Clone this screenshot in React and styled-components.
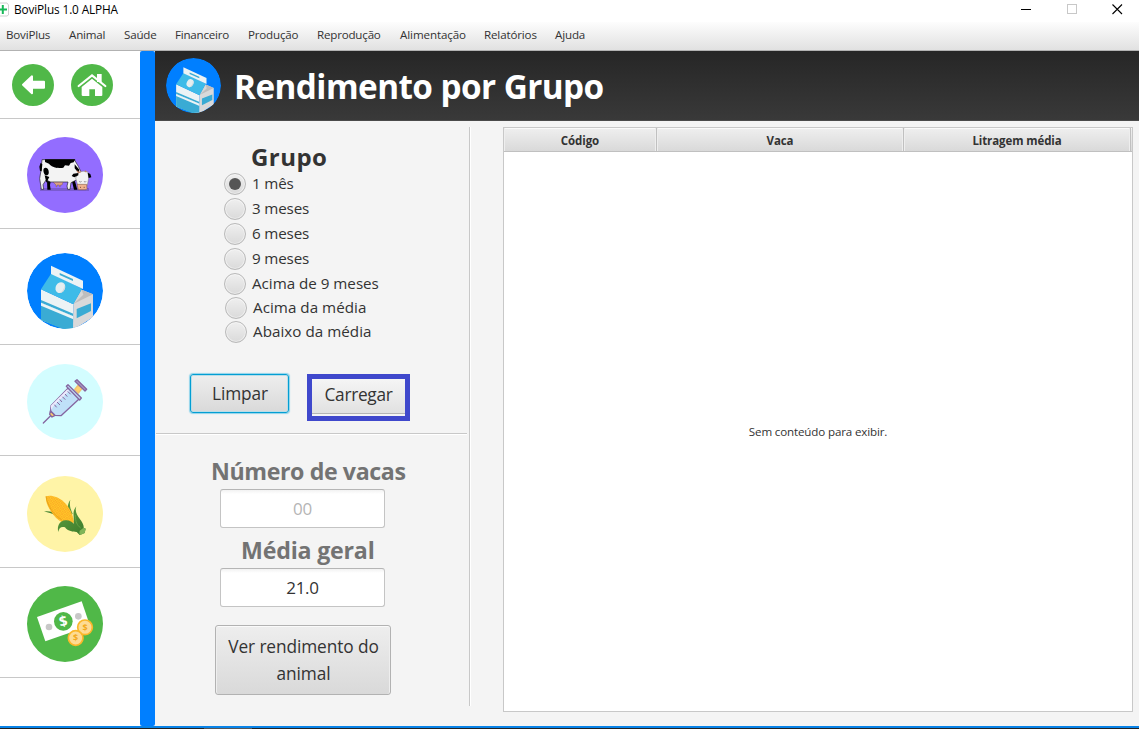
import React from "react";
import styled, { createGlobalStyle } from "styled-components";

const Global = createGlobalStyle`
  * { box-sizing: border-box; }
  html, body { margin: 0; padding: 0; }
  body { background: #fff; overflow: hidden; font-family: "Open Sans", "Noto Sans", sans-serif; color: #333; }
`;

const Window = styled.div`
  width: 1139px; height: 729px; display: flex; flex-direction: column; background: #f4f4f4;
`;
const TitleBar = styled.header`
  height: 22px; flex: none; display: flex; align-items: center; background: #fff; color: #000; padding-bottom: 4px;
`;
const Title = styled.span`
  font-size: 11.8px; letter-spacing: -0.12px; white-space: nowrap; margin-left: 5px; line-height: 16px;
`;
const WindowControls = styled.div`
  margin-left: auto; display: flex; margin-right: 16px; gap: 33.5px; height: 18px;
  svg { display: block; }
`;
const MenuBar = styled.nav`
  height: 29px; flex: none; display: flex; align-items: center; padding: 0 0 3px 6px; gap: 19px;
  background: linear-gradient(#fdfdfd, #e1e1e1); border-bottom: 1px solid #b2b2b2;
`;
const MenuItem = styled.span`
  width: ${(p) => p.$w}px; font-size: 11.6px; letter-spacing: ${(p) => p.$ls}px; white-space: nowrap; line-height: 16px;
`;
const Main = styled.div`
  flex: 1; display: flex; min-height: 0; width: 1139px;
`;
const Sidebar = styled.aside`
  width: 140px; flex: none; background: #fff; display: flex; flex-direction: column;
`;
const NavButtons = styled.div`
  height: 68px; flex: none; border-bottom: 1px solid #c8c8c8; display: flex; padding: 13px 0 0 12px; gap: 17px;
  svg { display: block; }
`;
const SideItem = styled.div`
  height: ${(p) => p.$h}px; flex: none; border-bottom: 1px solid #c8c8c8; padding: ${(p) => p.$top}px 0 0 27px;
  svg { display: block; }
`;
const Strip = styled.div`
  width: 15px; flex: none; background: #007fff; border-radius: 2px;
`;
const Content = styled.main`
  flex: 1; display: flex; flex-direction: column; min-width: 0;
`;
const Banner = styled.div`
  height: 70px; flex: none; display: flex; align-items: center; padding-left: 11px;
  background: linear-gradient(#262626, #393939); border-bottom: 1px solid #4a4a4a;
`;
const BannerTitle = styled.h1`
  margin: 0 0 0 13px; font-size: 33.3px; line-height: 44px; font-weight: 700; color: #fff; letter-spacing: -0.57px; white-space: nowrap;
`;
const Body = styled.div`
  flex: 1; display: flex; min-height: 0;
`;
const Panel = styled.div`
  width: 314px; flex: none; display: flex; flex-direction: column;
`;
const Heading = styled.h2`
  margin: ${(p) => p.$m}; font-size: ${(p) => p.$size || 23.2}px; line-height: 32px; font-weight: 700; color: ${(p) => p.$color || "#333"};
  letter-spacing: ${(p) => p.$ls || 0}px; white-space: nowrap;
`;
const RadioRow = styled.label`
  height: ${(p) => p.$h || 25}px; display: flex; align-items: center; margin-left: ${(p) => p.$x || 69}px;
  font-size: 15.2px; letter-spacing: ${(p) => p.$ls}px; gap: 6px; white-space: nowrap;
`;
const RadioText = styled.span`
  padding-bottom: 2px;
`;
const Radio = styled.span`
  width: 22px; height: 22px; border-radius: 50%; border: 1px solid #b9b9b9; flex: none;
  background: linear-gradient(#efefef, #dadada); box-shadow: inset 0 0 0 1px rgba(255,255,255,.45);
  display: flex; align-items: center; justify-content: center;
`;
const Dot = styled.span`
  width: 12px; height: 12px; border-radius: 50%; background: #555;
`;
const Buttons = styled.div`
  display: flex; margin: 30px 0 0 35px; height: 48px; gap: 18px;
`;
const Button = styled.button`
  font: inherit; color: #333; font-size: 17.3px; padding: 0 0 1px; cursor: pointer;
  background: linear-gradient(#eeeeee, #d9d9d9); border: 1px solid #b2b2b2; border-radius: 3px;
  box-shadow: inset 0 1px 0 #fafafa, inset 1px 0 0 #eee, inset -1px 0 0 #eee;
`;
const FocusedButton = styled(Button)`
  width: 99px; height: 39px; border: 1px solid #039ed3; letter-spacing: -0.1px; padding: 0 0 0 1px;
  box-shadow: 0 0 1px 1px #8fd3ea, inset 0 0 0 1px #b9dde8;
`;
const Highlight = styled.div`
  width: 103px; height: 47px; border: 5px solid #3f48cc; display: flex; flex-direction: column;
`;
const HighlightedButton = styled(Button)`
  height: 35px; border: 0; border-bottom: 1px solid #b5b5b5; border-radius: 0; box-shadow: none;
  background: linear-gradient(#f5f5f5, #e1e1e1); letter-spacing: -0.3px; padding: 0 0 4px;
`;
const TallButton = styled(Button)`
  width: 176px; height: 70px; margin: 18px 0 0 60px; line-height: 27px; letter-spacing: -0.1px; padding: 0 0 1px 1px;
`;
const Rule = styled.hr`
  width: 311px; height: 2px; border: 0; border-top: 1px solid #c8c8c8; border-bottom: 1px solid #fff; margin: 11px 0 0 1px;
`;
const Field = styled.div`
  width: 165px; height: 39px; margin-left: 65px; border: 1px solid #c4c4c4; border-top-color: #b5b5b5; border-radius: 3px; background: linear-gradient(#f2f2f2, #fff 4px);
  display: flex; align-items: center; justify-content: center; font-size: 17px; color: ${(p) => p.$color}; letter-spacing: -0.3px;
`;
const VRule = styled.div`
  width: 2px; flex: none; height: 579px; margin-top: 6px; background: linear-gradient(90deg, #c8c8c8 50%, #fff 50%);
`;
const Table = styled.section`
  width: 630px; height: 585px; flex: none; margin: 6px 0 0 32px; background: #fff; border: 1px solid #c8c8c8; display: flex; flex-direction: column;
`;
const TableHead = styled.div`
  height: 24px; flex: none; display: flex; border-bottom: 1px solid #c0c0c0; background: linear-gradient(#efefef, #d9d9d9); box-shadow: inset 0 1px 0 #fafafa;
`;
const Column = styled.div`
  width: ${(p) => p.$w}px; border-right: 1px solid #c0c0c0; display: flex; align-items: center; justify-content: center; padding-top: 1px;
  font-size: 11.5px; font-weight: 700; letter-spacing: ${(p) => p.$ls}px; box-shadow: inset 1px 0 0 #eee, inset -1px 0 0 #eee;
`;
const Empty = styled.div`
  flex: 1; display: flex; align-items: center; justify-content: center; font-size: 11.6px; letter-spacing: -0.15px;
`;
const BottomEdge = styled.footer`
  height: 3px; flex: none; border-top: 2px solid #0883e8; background: linear-gradient(90deg, #222 204px, #555 204px 252px, #222 252px);
`;

const MilkIcon = ({ size, id }) => (
  <svg width={size} height={size} viewBox="81 39 228 228">
    <clipPath id={id}><circle cx="195" cy="153" r="114" /></clipPath>
    <g clipPath={`url(#${id})`}>
      <circle cx="195" cy="153" r="114" fill="#007fff" />
      <path d="M123 148 220 193 219 275 123 240Z" fill="#ecf3f5" />
      <path d="M123 188 220 229 219 280 123 240Z" fill="#3aabd4" />
      <path d="M123 180 220 221v8L123 188Z" fill="#3aabd4" />
      <path d="M123 188 220 229v9L123 197Z" fill="#ecf3f5" />
      <path d="M220 193 245 149 279 163V232L219 270Z" fill="#d9d9da" />
      <path d="M245 149 279 163 220 192Z" fill="#bdbdbd" />
      <path d="m245 149 5 15-30 29Z" fill="#d6d6d6" />
      <path d="M123 148 154 100 246 146 220 193Z" fill="#3ebbe8" />
      <path d="M153 77 249 122v25l-96-45Z" fill="#ecf3f5" />
      <path d="m179 99 40 18v6l-40-18Z" fill="#3aabd4" />
      <ellipse cx="181" cy="143" rx="14" ry="17" transform="rotate(30 181 143)" fill="#e5eef0" />
      <path d="M188 128c8 8 5 24-9 31 13 0 22-18 9-31Z" fill="#cdd6d9" />
      <path d="m230 207 43-17v23l-43 22Z" fill="#3aabd4" />
    </g>
  </svg>
);

const CowIcon = () => (
  <svg width="76" height="76" viewBox="81 51 228 228">
    <circle cx="195" cy="165" r="114" fill="#936dff" />
    <path d="M120 204H267v9H120Z" fill="#7a5bd0" />
    <path d="M141 180h12l-3 15 2 14h-10ZM215 180l10 4 7 25h-10Z" fill="#000" />
    <path d="M126 119H223l12 20 8 17-10 22-12 6-8 4-3 20h-7l-2-10 3-12-52 0-14-6-9 14 2 14h-7l-5-32 4-25Z" fill="#f3f3f3" stroke="#222" strokeWidth="2" />
    <path d="M135 118H226l-5 9-9 2-5 8-12-1-5 7c-11 3-15-1-19 1-12-2-21-8-24-13l-12-5ZM122 128l5 5-2 21-5-1-2-13ZM131 146c6-6 15 0 15 8 2 9-3 13-7 12-8-2-10-14-8-20ZM134 166l14 5-9 17ZM224 133l14 16-3 9-11-13Z" fill="#000" />
    <path d="M160 187h29l-3 8h-5v5h-3v-5h-7v5h-3v-5Z" fill="#dca383" stroke="#604234" strokeWidth="1" />
    <path d="M236 156q14-5 28 0l2 18-4 22h-29l-6-22Z" fill="#f3f3f3" stroke="#777" strokeWidth="1.5" />
    <path d="m235 159-15 2-5 7 8 4 12-6ZM263 158l8 4 3 10-8 2Z" fill="#000" />
    <path d="m231 153 5 5 7-3M255 152l4 4" fill="none" stroke="#c57f62" strokeWidth="3.5" />
    <path d="M231 193h29l1 13-3 3h-23Z" fill="#efb28e" stroke="#754c3c" strokeWidth="1.5" />
    <path d="m238 183 3 4 4-4M252 183l3 4 4-4" fill="none" stroke="#777" strokeWidth="2" />
    <path d="M240 202h3m8 0h3" stroke="#7b4c3b" strokeWidth="3" />
  </svg>
);

const SyringeIcon = () => (
  <svg width="76" height="76" viewBox="81 42 228 228">
    <circle cx="195" cy="156" r="114" fill="#d3fdff" />
    <g stroke="#8565a0" strokeWidth="4" strokeLinejoin="round" strokeLinecap="round">
      <path d="m130 219 22-22" fill="none" />
      <path d="m151 183 14 13-9 5-7-8Z" fill="#f9c96b" />
      <path d="m205 114 33 32-55 51-18-1-13-13 1-16Z" fill="#bfe0f8" />
      <path d="m202 118 5 5-48 47-5 11-2-14Z" fill="#eceafd" stroke="none" />
      <path d="m224 118 11-13 11 11-11 13Z" fill="#ffd071" stroke="#f2c270" />
      <path d="m199 109 5-5 40 40-5 6Z" fill="#bfe0f8" />
      <path d="m225 94 6-5 29 29-5 5Z" fill="#a79bc0" />
      <path d="m204 125 7 7m-15 1 5 6m-13 2 7 7m-15 1 5 6m-13 2 7 7m-15 1 5 6" fill="none" strokeWidth="3" />
    </g>
  </svg>
);

const CornIcon = () => (
  <svg width="76" height="76" viewBox="81 48 228 228">
    <defs>
      <pattern id="kernels" width="8" height="8" patternUnits="userSpaceOnUse" patternTransform="rotate(12)">
        <rect width="8" height="8" fill="#ffc928" /><path d="M0 0 8 8M8 0 0 8" stroke="#f99a25" strokeWidth="1.4" />
      </pattern>
      <linearGradient id="husk" x1="0" y1="0" x2="1" y2="1">
        <stop offset="0" stopColor="#5f9d40" /><stop offset="1" stopColor="#3b7b2b" />
      </linearGradient>
    </defs>
    <circle cx="195" cy="162" r="114" fill="#fff4a7" />
    <path d="M132 154c18-2 32 3 43 12l17 22c-16-24-34-26-60-34Z" fill="#3f802d" />
    <path d="M211 119c-4 18 2 32 7 42l-9 10c-8-16-9-36 2-52Z" fill="#5b973d" />
    <path d="M138 109c15-5 38 2 53 16 16 14 27 35 31 61l-8 10c-25-1-52-23-66-50-6-12-12-23-10-37Z" fill="url(#kernels)" />
    <path d="M138 109c5 28 20 54 47 70" fill="none" stroke="#e7a51b" strokeWidth="3" />
    <path d="M229 139c-5 15 1 25 10 37 8 11 13 19 12 27l6 3-3 13-15 6-9-9c-14 0-28-4-35-14-10-4-19 1-20 14-5-17 4-33 20-35 10-2 19 2 26 10 3-22-7-33 8-52Z" fill="url(#husk)" />
    <path d="M226 165c1 22 4 29 16 39" fill="none" stroke="#65a345" strokeWidth="3" />
    <path d="m239 212 12-9 6 3-3 13-11 5-5-3Z" fill="#80b558" />
  </svg>
);

const MoneyIcon = () => (
  <svg width="76" height="76" viewBox="81 48 228 228" fontFamily="Open Sans, sans-serif" fontWeight="700" textAnchor="middle">
    <circle cx="195" cy="162" r="114" fill="#50b848" />
    <path d="m111 141 134-47 25 73-134 47Z" fill="#fff" />
    <circle cx="147" cy="171" r="10" fill="#c8c8c8" />
    <circle cx="235" cy="139" r="10" fill="#c8c8c8" />
    <circle cx="190" cy="154" r="28" fill="#50b848" />
    <text x="190" y="169" fontSize="43" fill="#fff" transform="rotate(-12 190 154)">$</text>
    <circle cx="255" cy="172" r="22" fill="#fddb93" stroke="#fbb72a" strokeWidth="5" />
    <text x="255" y="182" fontSize="27" fill="#f2a91b">$</text>
    <circle cx="227" cy="204" r="22" fill="#fddb93" stroke="#fbb72a" strokeWidth="5" />
    <text x="227" y="214" fontSize="27" fill="#f2a91b">$</text>
  </svg>
);

const BackIcon = () => (
  <svg width="42" height="42" viewBox="36 192 126 126">
    <circle cx="99" cy="255" r="63" fill="#50b848" />
    <path d="M69 254 96 229v16h36v18H96v17Z" fill="#fff" stroke="#fff" strokeWidth="6" strokeLinejoin="round" />
  </svg>
);

const HomeIcon = () => (
  <svg width="42" height="42" viewBox="213 192 126 126">
    <circle cx="276" cy="255" r="63" fill="#50b848" />
    <path d="M291 222h14v24h-14Z" fill="#fff" />
    <path d="M236 258 276 226l40 32" fill="none" stroke="#fff" strokeWidth="6.5" strokeLinecap="round" />
    <path d="m276 236 31 25v24q0 3-3 3h-19v-20h-17v20h-19q-4 0-4-3v-24Z" fill="#fff" />
  </svg>
);

const menu = [
  ["BoviPlus", 44, -0.2], ["Animal", 36, -0.2], ["Saúde", 32, -0.2], ["Financeiro", 54, -0.22], ["Produção", 50, -0.2],
  ["Reprodução", 64, -0.2], ["Alimentação", 65, -0.1], ["Relatórios", 52, -0.15], ["Ajuda", 31, -0.15],
];
const groups = ["1 mês", "3 meses", "6 meses", "9 meses", "Acima de 9 meses"];
const averages = ["Acima da média", "Abaixo da média"];
const columns = [["Código", 153], ["Vaca", 247], ["Litragem média", 227]];

export default function App() {
  return (
    <>
      <Global />
      <Window>
        <TitleBar>
          <svg width="9" height="18" viewBox="0 0 9 18">
            <path d="M0 3H7L8.5 5V15L7 16H0" fill="none" stroke="#d0d0d0" />
            <path d="M0 9.5H7M2.8 5V14" stroke="#18b858" strokeWidth="2" />
          </svg>
          <Title>BoviPlus 1.0 ALPHA</Title>
          <WindowControls>
            <svg width="12" height="18"><path d="M1 9.5H11" stroke="#000" /></svg>
            <svg width="12" height="18"><rect x="1.5" y="4.5" width="9" height="9" fill="none" stroke="#c8c8c8" /></svg>
            <svg width="12" height="18"><path d="M1.5 4.5 11 14M11 4.5 1.5 14" stroke="#000" strokeWidth="1.1" /></svg>
          </WindowControls>
        </TitleBar>
        <MenuBar>
          {menu.map(([label, w, ls]) => <MenuItem key={label} $w={w} $ls={ls}>{label}</MenuItem>)}
        </MenuBar>
        <Main>
          <Sidebar>
            <NavButtons><BackIcon /><HomeIcon /></NavButtons>
            <SideItem $h={110} $top={18}><CowIcon /></SideItem>
            <SideItem $h={116} $top={24}><MilkIcon size={76} id="milkSide" /></SideItem>
            <SideItem $h={111} $top={19}><SyringeIcon /></SideItem>
            <SideItem $h={112} $top={20}><CornIcon /></SideItem>
            <SideItem $h={110} $top={18}><MoneyIcon /></SideItem>
          </Sidebar>
          <Strip />
          <Content>
            <Banner>
              <MilkIcon size={55} id="milkBanner" />
              <BannerTitle>Rendimento por Grupo</BannerTitle>
            </Banner>
            <Body>
              <Panel>
                <Heading $m="20px 0 -2px 96px" $size={24} $ls={0.45}>Grupo</Heading>
                {groups.map((g, i) => (
                  <RadioRow key={g} $ls={g.length > 8 ? -0.02 : -0.15}><Radio>{i === 0 && <Dot />}</Radio><RadioText>{g}</RadioText></RadioRow>
                ))}
                {averages.map((g) => (
                  <RadioRow key={g} $h={24} $x={70} $ls={0.03}><Radio /><RadioText>{g}</RadioText></RadioRow>
                ))}
                <Buttons>
                  <FocusedButton>Limpar</FocusedButton>
                  <Highlight><HighlightedButton>Carregar</HighlightedButton></Highlight>
                </Buttons>
                <Rule />
                <Heading $m="20px 0 2px 56px" $color="#737373" $ls={-0.4}>Número de vacas</Heading>
                <Field $color="#b5b5b5">00</Field>
                <Heading $m="6px 0 2px 86px" $color="#737373" $ls={-0.2}>Média geral</Heading>
                <Field $color="#333">21.0</Field>
                <TallButton>Ver rendimento do<br />animal</TallButton>
              </Panel>
              <VRule />
              <Table>
                <TableHead>
                  {columns.map(([label, w]) => <Column key={label} $w={w} $ls={-0.1}>{label}</Column>)}
                </TableHead>
                <Empty>Sem conteúdo para exibir.</Empty>
              </Table>
            </Body>
          </Content>
        </Main>
        <BottomEdge />
      </Window>
    </>
  );
}
